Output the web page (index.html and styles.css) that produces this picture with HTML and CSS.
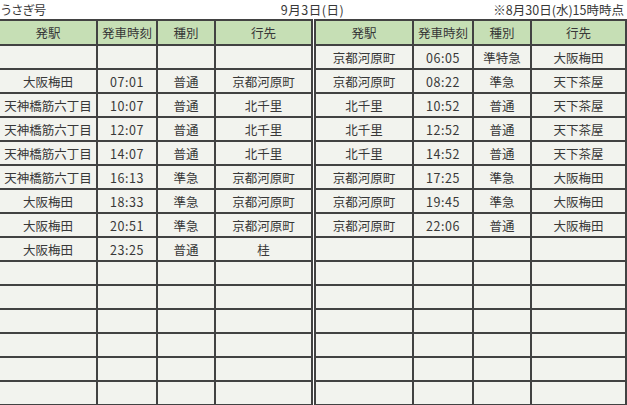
FILE: index.html
```html
<!DOCTYPE html>
<html lang="ja">
<head>
<meta charset="utf-8">
<title>うさぎ号</title>
<link rel="stylesheet" href="styles.css">
</head>
<body>
<div class="title">
  <span class="t-left">うさぎ号</span>
  <span class="t-center">9月3日(日)</span>
  <span class="t-right">※8月30日(水)15時時点</span>
</div>
<div class="tables">
  <div class="grid grid-left">
    <div class="h">発駅</div><div class="h">発車時刻</div><div class="h">種別</div><div class="h">行先</div>
    <div class="c"></div><div class="c"></div><div class="c"></div><div class="c"></div>
    <div class="c">大阪梅田</div><div class="c num">07:01</div><div class="c">普通</div><div class="c">京都河原町</div>
    <div class="c">天神橋筋六丁目</div><div class="c num">10:07</div><div class="c">普通</div><div class="c">北千里</div>
    <div class="c">天神橋筋六丁目</div><div class="c num">12:07</div><div class="c">普通</div><div class="c">北千里</div>
    <div class="c">天神橋筋六丁目</div><div class="c num">14:07</div><div class="c">普通</div><div class="c">北千里</div>
    <div class="c">天神橋筋六丁目</div><div class="c num">16:13</div><div class="c">準急</div><div class="c">京都河原町</div>
    <div class="c">大阪梅田</div><div class="c num">18:33</div><div class="c">準急</div><div class="c">京都河原町</div>
    <div class="c">大阪梅田</div><div class="c num">20:51</div><div class="c">準急</div><div class="c">京都河原町</div>
    <div class="c">大阪梅田</div><div class="c num">23:25</div><div class="c">普通</div><div class="c">桂</div>
    <div class="c"></div><div class="c"></div><div class="c"></div><div class="c"></div>
    <div class="c"></div><div class="c"></div><div class="c"></div><div class="c"></div>
    <div class="c"></div><div class="c"></div><div class="c"></div><div class="c"></div>
    <div class="c"></div><div class="c"></div><div class="c"></div><div class="c"></div>
    <div class="c"></div><div class="c"></div><div class="c"></div><div class="c"></div>
    <div class="c"></div><div class="c"></div><div class="c"></div><div class="c"></div>
  </div>
  <div class="grid grid-right">
    <div class="h">発駅</div><div class="h">発車時刻</div><div class="h">種別</div><div class="h">行先</div>
    <div class="c">京都河原町</div><div class="c num">06:05</div><div class="c">準特急</div><div class="c">大阪梅田</div>
    <div class="c">京都河原町</div><div class="c num">08:22</div><div class="c">準急</div><div class="c">天下茶屋</div>
    <div class="c">北千里</div><div class="c num">10:52</div><div class="c">普通</div><div class="c">天下茶屋</div>
    <div class="c">北千里</div><div class="c num">12:52</div><div class="c">普通</div><div class="c">天下茶屋</div>
    <div class="c">北千里</div><div class="c num">14:52</div><div class="c">普通</div><div class="c">天下茶屋</div>
    <div class="c">京都河原町</div><div class="c num">17:25</div><div class="c">準急</div><div class="c">大阪梅田</div>
    <div class="c">京都河原町</div><div class="c num">19:45</div><div class="c">準急</div><div class="c">大阪梅田</div>
    <div class="c">京都河原町</div><div class="c num">22:06</div><div class="c">普通</div><div class="c">大阪梅田</div>
    <div class="c"></div><div class="c"></div><div class="c"></div><div class="c"></div>
    <div class="c"></div><div class="c"></div><div class="c"></div><div class="c"></div>
    <div class="c"></div><div class="c"></div><div class="c"></div><div class="c"></div>
    <div class="c"></div><div class="c"></div><div class="c"></div><div class="c"></div>
    <div class="c"></div><div class="c"></div><div class="c"></div><div class="c"></div>
    <div class="c"></div><div class="c"></div><div class="c"></div><div class="c"></div>
    <div class="c"></div><div class="c"></div><div class="c"></div><div class="c"></div>
  </div>
</div>
</body>
</html>
```
FILE: styles.css
```css
html, body {
  margin: 0;
  padding: 0;
  background: #ffffff;
}
body {
  width: 627px;
  height: 405px;
  overflow: hidden;
  font-family: "Noto Sans CJK JP", "Noto Sans", sans-serif;
  color: #383838;
}
.title {
  height: 19px;
  display: grid;
  grid-template-columns: 1fr auto 1fr;
  align-items: center;
  font-size: 12.5px;
  line-height: 19px;
  padding: 0 3px 0 1px;
  box-sizing: border-box;
}
.t-left {
  font-feature-settings: "palt";
  justify-self: start;
}
.t-center {
  justify-self: center;
  letter-spacing: 0.5px;
}
.t-right {
  justify-self: end;
}
.tables {
  display: flex;
  gap: 1px;
  align-items: flex-start;
}
.grid {
  display: grid;
  grid-template-rows: 23px repeat(15, 22px);
  gap: 2px;
  padding-top: 2px;
  padding-bottom: 2px;
  padding-right: 2px;
  background: #424242;
}
.grid-left {
  grid-template-columns: 96px 58px 56px 95px;
}
.grid-right {
  grid-template-columns: 96px 58px 56px 93px;
  padding-left: 2px;
}
.h, .c {
  display: flex;
  align-items: center;
  justify-content: center;
  font-size: 12.5px;
  white-space: nowrap;
  overflow: hidden;
}
.h {
  background: #c6dfb5;
}
.c {
  background: #f2f3ee;
}
.num {
  letter-spacing: 0.6px;
}
```
